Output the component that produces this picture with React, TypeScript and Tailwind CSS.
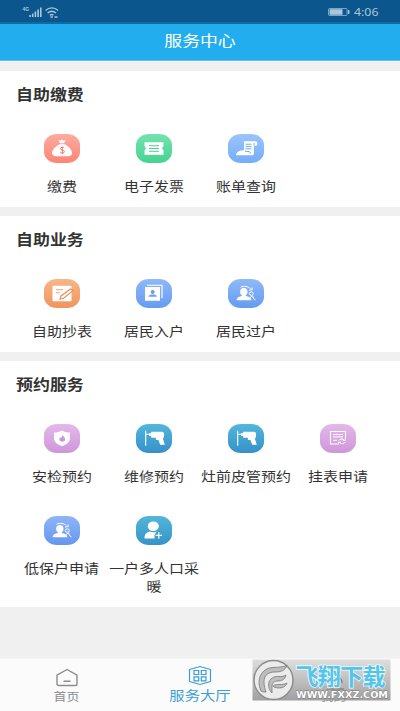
import React from 'react'

const MoneyBag = () => (
  <svg className="h-full w-full" viewBox="0 0 36 28" fill="none">
    <path d="M14.5 5.5l2 1 1.5-1.3 1.6 1.3 2-1-1.4 3.6h-4.2z" fill="#fff" />
    <path d="M15.6 10h5c3.8 2 7.4 5.4 7.4 8.800 0 2.200-1.800 3.200-4 3.200H12c-2.500 0-4-1.200-4-3.200C8 15.400 12 12 15.600 10z" fill="#fff" />
    <path d="M20.200 13.700c-.7-1-3.800-1-3.800.7 0 2 4 .9 4 3 0 1.800-3.200 1.800-4.200.5M18.300 12.200v7.600" stroke="#f4776b" strokeWidth="1" />
  </svg>
)

const Ticket = () => (
  <svg className="h-full w-full" viewBox="0 0 36 28" fill="none">
    <path d="M8.500 8h19v4a2.200 2.200 0 000 4v4.500h-19V16a2.200 2.200 0 000-4z" fill="#fff" />
    <path d="M13 11.500h10M13 14.200h10M13 17h10" stroke="#4cc994" strokeWidth="1" />
  </svg>
)

const Bill = () => (
  <svg className="h-full w-full" viewBox="0 0 36 28" fill="none">
    <path d="M16 7h11.500c2 0 2.300 3.500 1 4.500H26V19c0 1.500-1 2-2.500 2H8v-1.200c2-3 4-4 8-3.800z" fill="#fff" />
    <path d="M17.500 10h6M17.500 12.300h6M17.500 14.500h6M26 11.300V8.800M17 17l4 .3 2 1.700" stroke="#72a9f3" strokeWidth="1" />
  </svg>
)

const EditForm = () => (
  <svg className="h-full w-full" viewBox="0 0 36 28" fill="none">
    <rect x="8.500" y="6.500" width="19" height="15.500" rx="1" fill="#fff" />
    <path d="M12 10.500h7M12 13.500h4" stroke="#f2a16d" strokeWidth="1" />
    <path d="M16 20l1-3.300 9.500-7 2.500 1.700-9.500 7.600z" fill="#fff" stroke="#e98c55" strokeWidth="1.100" />
  </svg>
)

const IdCard = () => (
  <svg className="h-full w-full" viewBox="0 0 36 28" fill="none">
    <path d="M11 6h15v13" stroke="#fff" strokeWidth="1.200" />
    <rect x="9" y="7.800" width="15" height="13.700" fill="#fff" />
    <circle cx="16.700" cy="12.700" r="2" fill="#6c9eea" />
    <path d="M12.500 17.500c.5-2 2-2.300 4.200-2.300s3.700.3 4.200 2.300z" fill="#6c9eea" />
  </svg>
)

const UserSearch = () => (
  <svg className="h-full w-full" viewBox="0 0 36 28" fill="none">
    <ellipse cx="15.800" cy="12.500" rx="3.700" ry="3.800" fill="#fff" />
    <path d="M13.800 14.500h4v2.300c3 .5 5.200 1.300 5.700 4.200H8.500c.3-2.900 2.500-3.700 5.300-4.200z" fill="#fff" />
    <path d="M12.500 8c3.500-1.700 7.500-1 10 1.500M21 11l3.300-.8-.3-2" stroke="#fff" strokeWidth="1" />
    <ellipse cx="23.300" cy="14.300" rx="2" ry="1.700" stroke="#fff" strokeWidth="1" />
    <path d="M22 18.300l2.500-1.700 1 2.700 2 1.300" stroke="#fff" strokeWidth="1" />
  </svg>
)

const Shield = () => (
  <svg className="h-full w-full" viewBox="0 0 36 28" fill="none">
    <path d="M18 6.200c2.300 1.500 5 2 8 2v6c0 3.300-3.500 6-8 7.800-4.500-1.800-8-4.500-8-7.800v-6c3 0 5.700-.5 8-2z" fill="#fff" />
    <path d="M18.200 11c1.800 1.500 3 2.500 3 4 0 1.600-1.400 2.300-2.900 2.300s-3-.8-3-2.300c0-.8.5-1.400 1.300-2l.7.700z" fill="#cd96d8" />
  </svg>
)

const Drill = () => (
  <svg className="h-full w-full" viewBox="0 0 36 28" fill="none">
    <path d="M9.700 6.500v15M10.300 10h4" stroke="#fff" strokeWidth="1.100" />
    <path d="M13 9h2.200V7.500h11.300l1.500 1.300v4.500l-1.200.7 2 6.500h-4.600l-1.800-4.700h-2.500v-2.300h-4.700v-1.700H13z" fill="#fff" />
  </svg>
)

const FormSync = () => (
  <svg className="h-full w-full" viewBox="0 0 36 28" fill="none">
    <path d="M18 19.800h-7.500V7.200h15V14" stroke="#fff" strokeWidth="1.100" />
    <path d="M13 10.300h10M13 12.700h10M13 16h4" stroke="#fff" strokeWidth="1" />
    <path d="M18.700 16.500c1-2 4.500-2.300 5.500-.8M25.300 14v2.200h-2.500M25.300 17.700c-1 2-4.500 2.200-5.600.7M18.500 20v-2.100H21" stroke="#fff" strokeWidth="1" />
  </svg>
)

const UserPlus = () => (
  <svg className="h-full w-full" viewBox="0 0 36 28" fill="none">
    <ellipse cx="17.300" cy="10" rx="5.500" ry="4.800" fill="#fff" />
    <path d="M13.500 15.300c2 1 5 .9 7 .2l-2 3.300v3.500H8.500c-.3-3.500 1.500-6 5-7z" fill="#fff" />
    <path d="M22.800 16v6.500M19.600 19.200h6.500" stroke="#fff" strokeWidth="1.200" />
  </svg>
)

const sections = [
  {
    title: '自助缴费',
    items: [
      { label: '缴费', bg: 'from-[#fdaba0] to-[#fc8576]', icon: MoneyBag },
      { label: '电子发票', bg: 'from-[#74e2b0] to-[#43d391]', icon: Ticket },
      { label: '账单查询', bg: 'from-[#9ac5fb] to-[#74adf9]', icon: Bill },
    ],
  },
  {
    title: '自助业务',
    items: [
      { label: '自助抄表', bg: 'from-[#f8b687] to-[#f0945d]', icon: EditForm },
      { label: '居民入户', bg: 'from-[#8fb9f8] to-[#659bf0]', icon: IdCard },
      { label: '居民过户', bg: 'from-[#8fb9f8] to-[#659bf0]', icon: UserSearch },
    ],
  },
  {
    title: '预约服务',
    items: [
      { label: '安检预约', bg: 'from-[#e4b8ea] to-[#ce96da]', icon: Shield },
      { label: '维修预约', bg: 'from-[#53b7dc] to-[#3690c9]', icon: Drill },
      { label: '灶前皮管预约', bg: 'from-[#53b7dc] to-[#3690c9]', icon: Drill },
      { label: '挂表申请', bg: 'from-[#e4b8ea] to-[#ce96da]', icon: FormSync },
      { label: '低保户申请', bg: 'from-[#8fb5f8] to-[#6596ee]', icon: UserSearch },
      { label: '一户多人口采\n暖', bg: 'from-[#52b7da] to-[#3793c6]', icon: UserPlus },
    ],
  },
]

const StatusBar = () => (
  <div className="flex h-6 items-center justify-between border-b-2 border-[#106c9e] bg-[#0a568d] pt-0.5 pr-[21px] pl-[22px] text-[#a9c6dc]">
    <svg className="h-3 w-[38px]" viewBox="0 0 38 12" fill="none">
      <text x="0.500" y="5" fontSize="5" fontWeight="700" fill="currentColor" fontFamily="Liberation Sans">4G</text>
      <path d="M8 11V9M10.700 11V7.500M13.400 11V5.500M16.100 11V3.500M18.800 11V1.500" stroke="currentColor" strokeWidth="1.600" />
      <path d="M23.500 4.500c4-3.500 9-3.500 12.500 0M25.500 7c2.800-2.300 5.800-2.300 8.500 0M27.800 9.300c1.200-1 2.500-1 3.700 0" stroke="currentColor" strokeWidth="1.300" />
      <path d="M28.500 11h2.300M32.500 11h3" stroke="currentColor" strokeWidth="1.300" />
    </svg>
    <div className="flex items-center gap-1">
      <svg className="h-2 w-[22px]" viewBox="0 0 22 8" fill="none">
        <rect x=".5" y=".5" width="18.500" height="7" rx="1" stroke="currentColor" opacity=".7" />
        <rect x="1.500" y="1.200" width="13" height="5.600" fill="currentColor" />
        <path d="M20.700 2v4" stroke="currentColor" strokeWidth="1.500" />
      </svg>
      <span className="-mt-px w-[25px] text-[11px] leading-none">
        <span className="inline-block origin-left scale-x-[1.120] font-['Noto_Sans',sans-serif]">4:06</span>
      </span>
    </div>
  </div>
)

const Watermark = () => (
  <svg className="absolute top-0 left-[252px] h-[42px] w-[139px]" viewBox="0 0 139 42" fill="none">
    <defs>
      <linearGradient id="plate" x1="0" y1="0" x2="0" y2="1">
        <stop offset="0" stopColor="#dcdcdc" />
        <stop offset="1" stopColor="#9a9a9a" />
      </linearGradient>
    </defs>
    <rect x=".5" y=".5" width="138" height="41" fill="url(#plate)" opacity=".93" />
    <circle cx="21.500" cy="21" r="19.500" fill="#ebebeb" stroke="#8b8b8b" strokeWidth="1.400" />
    <path d="M9 32C4 21 9 9 21 8.500c5-.3 9-.3 14-2-2 5-6 6.500-12 6.500-8 0-11 4-11 10 0 4 1 7 2 10-2 0-4 0-5-1z" fill="#bdbdbd" stroke="#777" strokeWidth=".8" />
    <path d="M17 23c2-5 7-6 10-5.500 3 .4 5-.5 7-1.500-1 5-5 6-8 6-4 0-6 2-6 6v6c-3-3-4-7-3-11z" fill="#bdbdbd" stroke="#777" strokeWidth=".8" />
    <path d="M21 27c4-3 9 0 14-3-1 4-6 6-12 4.500z" fill="#bdbdbd" stroke="#777" strokeWidth=".8" />
    <path d="M77 24c0-9 13-9 13 0M75 30h17" stroke="#777" strokeWidth="1.200" />
    <text x="43.500" y="26" fontSize="23" fontWeight="700" textLength="90" fill="#54c4ea" stroke="#eef9fd" strokeWidth="1.600" paintOrder="stroke" fontFamily="Noto Sans CJK SC, sans-serif">飞翔下载</text>
    <text x="44" y="38.500" fontSize="9.500" fontWeight="700" textLength="92" lengthAdjust="spacingAndGlyphs" fill="#fff" stroke="#777" strokeWidth=".8" paintOrder="stroke" fontFamily="DejaVu Sans, sans-serif">WWW.FXXZ.COM</text>
  </svg>
)

const App = () => {
  return (
    <div className="flex h-[711px] w-[400px] flex-col overflow-hidden bg-[#f0f0f0] font-['Noto_Sans_CJK_SC',sans-serif] text-[#333]">
      <StatusBar />

      <header className="flex h-[37px] items-center justify-center border-b border-[#6dbbe5] bg-[#22aeee] pb-1 text-[15px] leading-5 text-white">
        <span className="inline-block scale-x-[1.190]">服务中心</span>
      </header>

      <main className="flex flex-1 flex-col gap-[9px] border-t border-[#f7fcff] pt-[9px]">
        {sections.map((section) => (
          <section key={section.title} className="bg-white px-4 pt-[13px] pb-3 last:pb-[11px]">
            <h2 className="mb-[30px] h-5 text-[15px] leading-5 font-bold">
              <span className="inline-block origin-left scale-x-[1.130]">{section.title}</span>
            </h2>
            <div className="grid grid-cols-4 gap-y-[31px]">
              {section.items.map((item) => (
                <div key={item.label} className="flex flex-col items-center">
                  <div className={`h-[28.500px] w-9 rounded-[13px/11px] bg-linear-to-b ${item.bg}`}>
                    <item.icon />
                  </div>
                  <span className="mt-[14px] scale-x-[1.150] text-center text-[13px] leading-[18.500px] whitespace-pre">{item.label}</span>
                </div>
              ))}
            </div>
          </section>
        ))}
      </main>

      {/* Bottom tabs */}
      <nav className="relative grid h-[53px] grid-cols-3 border-t border-[#f5f5f5] bg-[#fbfbfb]">
        <div className="flex flex-col items-center pt-[9px] text-[#8c8c8c]">
          <svg className="h-[19px] w-6" viewBox="0 0 24 19" fill="none" stroke="currentColor" strokeWidth="1.400">
            <path d="M2 7.200L12 1.500l10 5.700V16c0 .9-.7 1.500-1.600 1.500H3.600C2.700 17.500 2 16.900 2 16zM8.500 13.300h7" strokeLinejoin="round" />
          </svg>
          <span className="mt-px scale-x-[1.130] text-[11.500px] leading-4">首页</span>
        </div>
        <div className="flex flex-col items-center pt-1.5 text-[#3b9fd3]">
          <svg className="h-[21px] w-6" viewBox="0 0 24 21" fill="none" stroke="currentColor" strokeWidth="1.200">
            <path d="M12 1.500l10.500 3v12L12 19.500l-10.500-3v-12z" strokeLinejoin="round" />
            <path d="M6 5.500h4.700v4H6zM13.300 5.500H18v4h-4.700zM6 11.800h4.700v4H6zM13.300 11.800H18v4h-4.700z" />
          </svg>
          <span className="mt-px scale-x-[1.180] text-[13px] leading-4">服务大厅</span>
        </div>
        <div className="flex flex-col items-center pt-[29px] text-[#8c8c8c]">
          <span className="scale-x-[1.130] text-[11.500px] leading-4">我的</span>
        </div>
        <Watermark />
      </nav>
    </div>
  )
}

export default App
